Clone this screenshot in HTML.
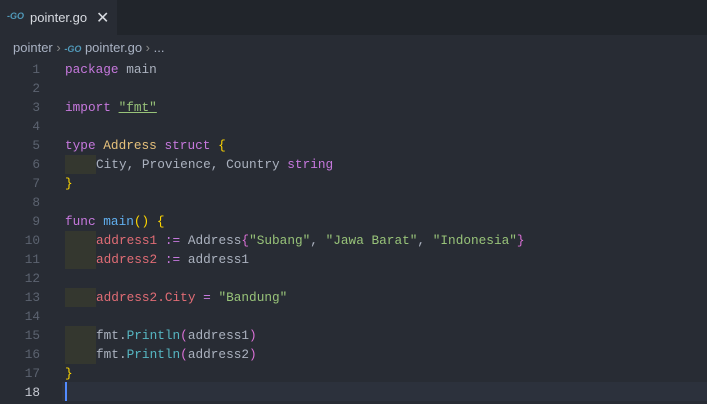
<!DOCTYPE html>
<html><head><style>
body{margin:0;width:707px;height:404px;background:#282c34;overflow:hidden;font-family:"Liberation Sans",sans-serif;position:relative}
.tabbar{position:absolute;left:0;top:0;width:707px;height:35px;background:#21252b}
.tab{position:absolute;left:0;top:0;width:117px;height:36px;background:#282c34;color:#d7dae0;font-size:13px}
.go{color:#519aba;font-weight:bold;font-style:italic;font-size:9px}
.bc{position:absolute;left:13px;top:38px;color:#a9b2c3;font-size:13px;line-height:19px}
.ln{position:absolute;left:0;width:40px;text-align:right;color:#5c6370;font-family:"Liberation Mono",monospace;font-size:12.75px;line-height:19px}
.code{position:absolute;left:65px;font-family:"Liberation Mono",monospace;font-size:12.75px;line-height:19px;color:#abb2bf;white-space:pre}
.ind{display:inline-block;width:31px;height:19px;vertical-align:top;background:#34372f}
.k{color:#c678dd}.y{color:#e5c07b}.b{color:#61afef}.r{color:#e06c75}.g{color:#98c379}.c{color:#56b6c2}.br{color:#ffd700}.pk{color:#da70d6}
</style></head><body>
<div class="tabbar"><div class="tab"><span class="go" style="position:absolute;left:7px;top:11px">-GO</span><span style="position:absolute;left:30px;top:10px">pointer.go</span><span style="position:absolute;left:96px;top:8px;font-size:16px">✕</span></div></div>
<div class="bc">pointer <span style="color:#888">›</span> <span class="go">-GO</span> pointer.go <span style="color:#888">›</span> ...</div>
<div style="position:absolute;left:62px;top:382px;width:645px;height:19px;background:#2c313c"></div>
<div style="position:absolute;left:65px;top:382px;width:2px;height:19px;background:#528bff"></div>
<div class="ln" style="top:60px">1<br>2<br>3<br>4<br>5<br>6<br>7<br>8<br>9<br>10<br>11<br>12<br>13<br>14<br>15<br>16<br>17<br><span style="color:#c8ccd4">18</span></div>
<div class="code" style="top:60px"><span class="k">package</span> main

<span class="k">import</span> <span class="g" style="text-decoration:underline">"fmt"</span>

<span class="k">type</span> <span class="y">Address</span> <span class="k">struct</span> <span class="br">{</span>
<span class="ind"></span>City, Provience, Country <span class="k">string</span>
<span class="br">}</span>

<span class="k">func</span> <span class="b">main</span><span class="br">()</span> <span class="br">{</span>
<span class="ind"></span><span class="r">address1</span> <span class="k">:=</span> Address<span class="pk">{</span><span class="g">"Subang"</span>, <span class="g">"Jawa Barat"</span>, <span class="g">"Indonesia"</span><span class="pk">}</span>
<span class="ind"></span><span class="r">address2</span> <span class="k">:=</span> address1

<span class="ind"></span><span class="r">address2.City</span> <span class="k">=</span> <span class="g">"Bandung"</span>

<span class="ind"></span>fmt.<span class="c">Println</span><span class="pk">(</span>address1<span class="pk">)</span>
<span class="ind"></span>fmt.<span class="c">Println</span><span class="pk">(</span>address2<span class="pk">)</span>
<span class="br">}</span>
</div>
</body></html>
